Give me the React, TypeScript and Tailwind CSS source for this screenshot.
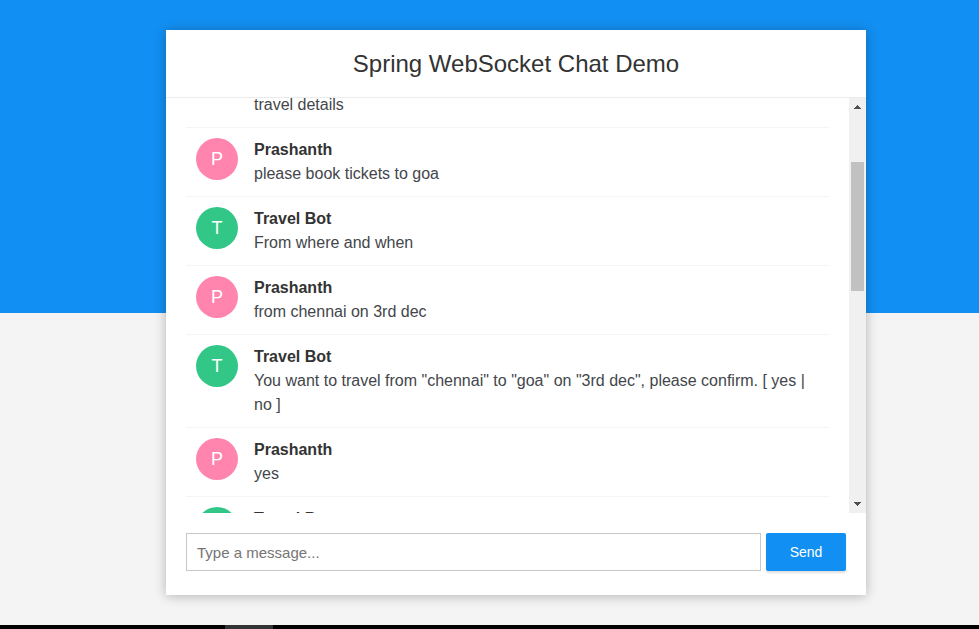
type Message = { sender?: string; text: string };

const messages: Message[] = [
  { text: "travel details" },
  { sender: "Prashanth", text: "please book tickets to goa" },
  { sender: "Travel Bot", text: "From where and when" },
  { sender: "Prashanth", text: "from chennai on 3rd dec" },
  {
    sender: "Travel Bot",
    text: 'You want to travel from "chennai" to "goa" on "3rd dec", please confirm. [ yes | no ]',
  },
  { sender: "Prashanth", text: "yes" },
  { sender: "Travel Bot", text: "" },
];

function Avatar({ name }: { name: string }) {
  const color = name === "Prashanth" ? "bg-[#ff85af]" : "bg-[#32c787]";
  return (
    <span className={`h-[42px] w-[42px] shrink-0 rounded-full text-center text-lg leading-[42px] text-white ${color}`}>
      {name[0]}
    </span>
  );
}

function MessageRow({ sender, text }: Message) {
  return (
    <li className="flex shrink-0 gap-4 border-b border-[#f4f4f4] px-2.5 pb-2.5 first:-mt-[5px] not-first:pt-2.5">
      {sender ? <Avatar name={sender} /> : <span className="w-[42px] shrink-0" />}
      <div className="min-w-0 flex-1 pr-2.5 text-base leading-6">
        {sender && <span className="block font-semibold text-[#333]">{sender}</span>}
        <p className="text-[#43464b]">{text}</p>
      </div>
    </li>
  );
}

function Scrollbar() {
  return (
    <div className="flex w-[17px] shrink-0 flex-col items-center bg-[#f0f0f0]">
      <svg width="17" height="17" viewBox="0 0 17 17" shapeRendering="crispEdges" className="shrink-0 fill-[#505050]">
        <path d="M8 7h1v1h1v1h1v1h1v1H5v-1h1V9h1V8h1z" />
      </svg>
      <div className="mt-[47px] h-[129px] w-[13px] bg-[#c1c1c1]" />
      <svg width="17" height="17" viewBox="0 0 17 17" shapeRendering="crispEdges" className="mt-auto shrink-0 fill-[#505050]">
        <path d="M5 6h7v1h-1v1h-1v1H9v1H8V9H7V8H6V7H5z" />
      </svg>
    </div>
  );
}

export default function App() {
  return (
    <div className="flex h-[629px] w-[979px] flex-col overflow-hidden bg-[linear-gradient(#128ff2_313px,#f4f4f4_313px)] pt-[30px] font-['Liberation_Sans',Arial,sans-serif] text-[#333]">
      <main className="ml-[166px] flex h-[565px] w-[700px] shrink-0 flex-col bg-white shadow-[0_1px_11px_rgba(0,0,0,0.27)]">
        <header className="h-[68px] shrink-0 border-b border-[#ececec] text-center">
          <h2 className="text-2xl leading-[67px] font-medium">Spring WebSocket Chat Demo</h2>
        </header>
        <div className="flex h-[415px] shrink-0 overflow-hidden">
          <ul className="flex min-w-0 flex-1 flex-col overflow-hidden px-5">
            {messages.map((message, i) => (
              <MessageRow key={i} {...message} />
            ))}
          </ul>
          <Scrollbar />
        </div>
        <form className="flex gap-[5px] p-5">
          <input
            type="text"
            placeholder="Type a message..."
            className="h-[38px] w-[575px] border border-[#c8c8c8] px-2.5 text-[15px] placeholder:text-[#757575]"
          />
          <button
            type="button"
            className="h-[38px] w-20 rounded-xs bg-[#128ff2] text-sm text-white shadow-[0_2px_2px_0_rgba(0,0,0,0.12)]"
          >
            Send
          </button>
        </form>
      </main>
      <footer className="mt-auto flex h-1 shrink-0 bg-black pl-[225px]">
        <span className="w-12 bg-[#333]" />
      </footer>
    </div>
  );
}
